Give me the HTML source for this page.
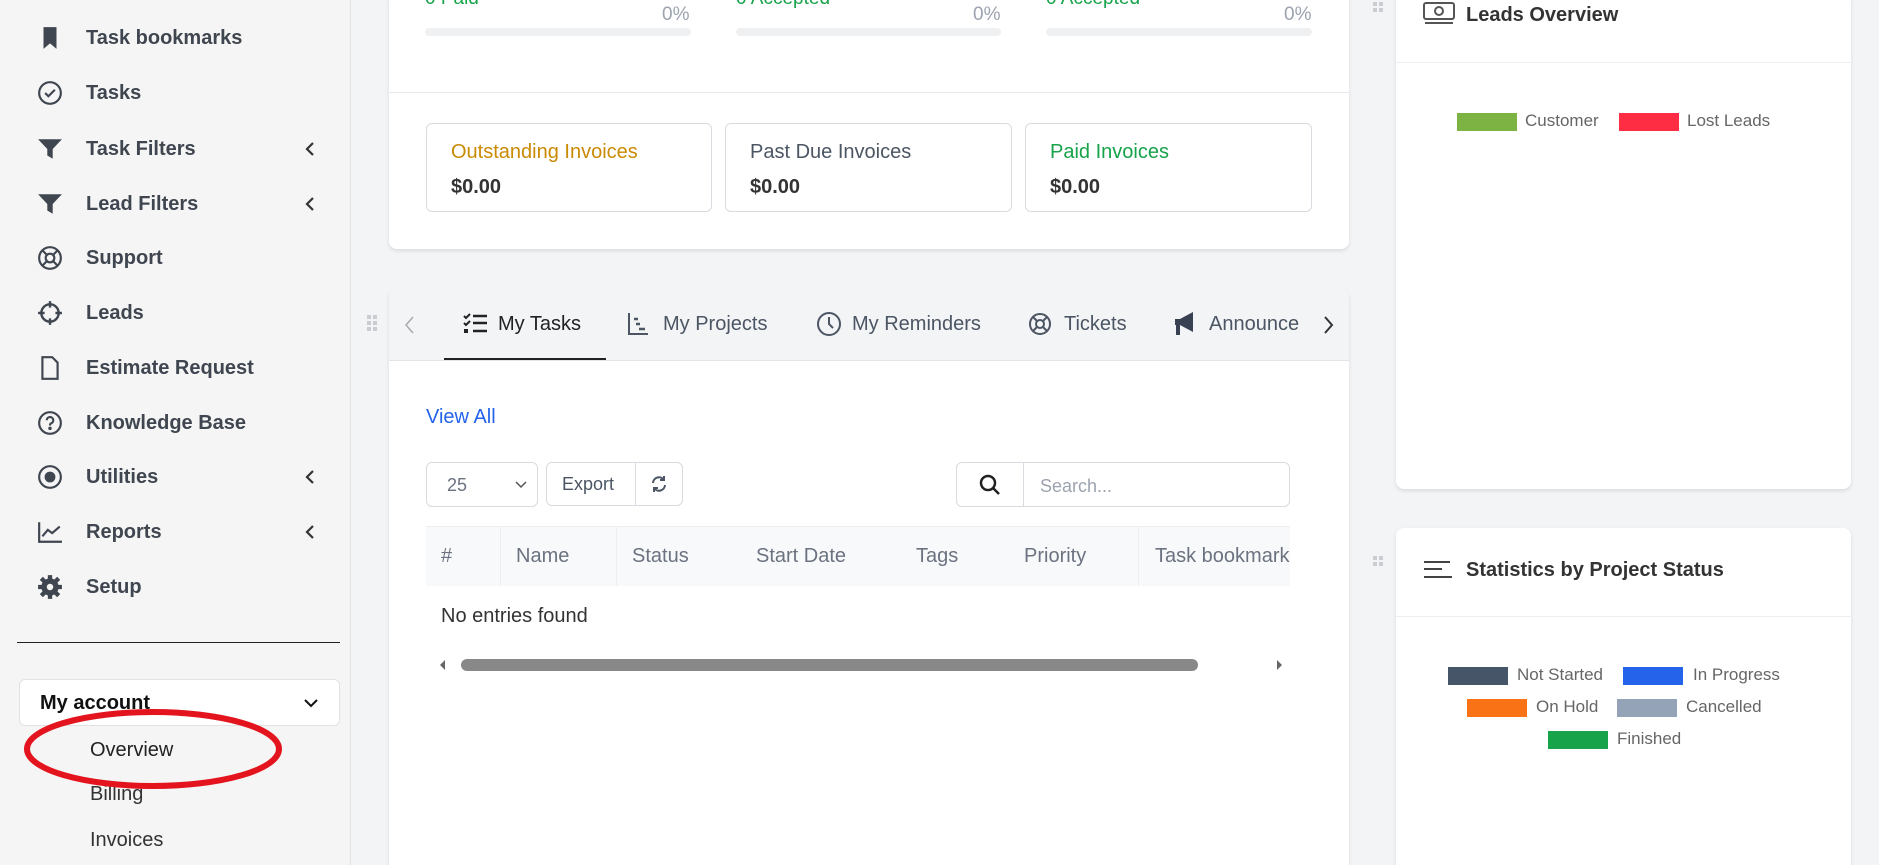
<!DOCTYPE html>
<html style="width:1879px;height:865px;overflow:hidden"><head><meta charset="utf-8"><style>
*{box-sizing:border-box;margin:0;padding:0}
body{width:1879px;height:865px;overflow:hidden;background:#f3f4f6;font-family:"Liberation Sans",sans-serif;position:relative;color:#374151}
.abs{position:absolute}
.side{left:0;top:0;width:351px;height:865px;background:#f5f5f5;border-right:1px solid #e3e3e3}
.item{position:absolute;left:0;width:350px;height:30px;display:flex;align-items:center}
.item svg{position:absolute;left:37px;width:26px;height:26px}
.item span{position:absolute;left:86px;font-size:20px;font-weight:bold;color:#3f4650}
.item .chev{position:absolute;left:300px;top:5px;width:20px;height:20px}
.card{background:#fff;border-radius:8px;box-shadow:0 2px 4px rgba(0,0,0,.1)}
.bar{height:8px;background:#eef0f2;border-radius:4px;top:28px}
.pct{font-size:19px;color:#9ca3af;top:4px}
.inv{top:123px;height:89px;border:1px solid #d8dbe0;border-radius:6px}
.inv .t{position:absolute;left:24px;top:17px;font-size:20px}
.inv .v{position:absolute;left:24px;top:52px;font-size:20px;font-weight:bold;color:#333}
.tab{top:313px;font-size:20px;color:#4b5563}
.th{top:545px;font-size:20px;color:#6b7280}
.lg{font-size:17px;color:#666}
.box{height:18px}
</style></head><body>
<div class="abs side">
 <div class="item" style="top:23px"><svg viewBox="0 0 24 24"><path d="M6 2h12v20l-6-5-6 5z" fill="#3f4650"/></svg><span>Task bookmarks</span></div>
 <div class="item" style="top:78px"><svg viewBox="0 0 24 24" fill="none" stroke="#3f4650" stroke-width="2"><circle cx="12" cy="12" r="10"/><path d="M7.5 12l3 3 6-6"/></svg><span>Tasks</span></div>
 <div class="item" style="top:134px"><svg viewBox="0 0 24 24"><path d="M1 3h22l-8.5 9v9l-5-3v-6z" fill="#3f4650"/></svg><span>Task Filters</span><svg class="chev" viewBox="0 0 20 20"><path d="M13 4l-6 6 6 6" fill="none" stroke="#333" stroke-width="2.2"/></svg></div>
 <div class="item" style="top:189px"><svg viewBox="0 0 24 24"><path d="M1 3h22l-8.5 9v9l-5-3v-6z" fill="#3f4650"/></svg><span>Lead Filters</span><svg class="chev" viewBox="0 0 20 20"><path d="M13 4l-6 6 6 6" fill="none" stroke="#333" stroke-width="2.2"/></svg></div>
 <div class="item" style="top:243px"><svg viewBox="0 0 24 24" fill="none" stroke="#3f4650" stroke-width="2"><circle cx="12" cy="12" r="10"/><circle cx="12" cy="12" r="4"/><path d="M5 5l4 4M19 5l-4 4M5 19l4-4M19 19l-4-4"/></svg><span>Support</span></div>
 <div class="item" style="top:298px"><svg viewBox="0 0 24 24" fill="none" stroke="#3f4650" stroke-width="2.2"><circle cx="12" cy="12" r="8"/><path d="M12 1v6M12 17v6M1 12h6M17 12h6"/></svg><span>Leads</span></div>
 <div class="item" style="top:353px"><svg viewBox="0 0 24 24" fill="none" stroke="#3f4650" stroke-width="2"><path d="M5 2h9l5 5v15H5z"/></svg><span>Estimate Request</span></div>
 <div class="item" style="top:408px"><svg viewBox="0 0 24 24" fill="none" stroke="#3f4650" stroke-width="2"><circle cx="12" cy="12" r="10"/><path d="M9 9.5a3 3 0 1 1 4 2.8c-1 .4-1 1-1 2"/><circle cx="12" cy="17" r=".6" fill="#3f4650"/></svg><span>Knowledge Base</span></div>
 <div class="item" style="top:462px"><svg viewBox="0 0 24 24" fill="none" stroke="#3f4650" stroke-width="2"><circle cx="12" cy="12" r="10"/><circle cx="12" cy="12" r="4" fill="#3f4650"/></svg><span>Utilities</span><svg class="chev" viewBox="0 0 20 20"><path d="M13 4l-6 6 6 6" fill="none" stroke="#333" stroke-width="2.2"/></svg></div>
 <div class="item" style="top:517px"><svg viewBox="0 0 24 24" fill="none" stroke="#3f4650" stroke-width="2"><path d="M2 3v18h21M5 16l5-6 4 3 7-6"/></svg><span>Reports</span><svg class="chev" viewBox="0 0 20 20"><path d="M13 4l-6 6 6 6" fill="none" stroke="#333" stroke-width="2.2"/></svg></div>
 <div class="item" style="top:572px"><svg viewBox="0 0 24 24"><circle cx="12" cy="12" r="8" fill="#3f4650"/><g stroke="#3f4650" stroke-width="4"><path d="M12 1v22M1 12h22M4 4l16 16M20 4L4 20"/></g><circle cx="12" cy="12" r="3" fill="#f5f5f5"/></svg><span>Setup</span></div>
 <div class="abs" style="left:17px;top:642px;width:323px;height:1px;background:#222"></div>
 <div class="abs" style="left:19px;top:679px;width:321px;height:47px;background:#fff;border:1px solid #e2e2e2;border-radius:6px"><span class="abs" style="left:20px;top:12px;font-size:20px;font-weight:bold;color:#111">My account</span><svg class="abs" style="left:283px;top:17px" width="16" height="12" viewBox="0 0 16 12"><path d="M2 3l6 6 6-6" fill="none" stroke="#111" stroke-width="2"/></svg></div>
 <div class="abs" style="left:90px;top:739px;font-size:20px;color:#222">Overview</div>
 <div class="abs" style="left:90px;top:783px;font-size:20px;color:#333">Billing</div>
 <div class="abs" style="left:90px;top:829px;font-size:20px;color:#333">Invoices</div>
</div>
<svg class="abs" style="left:20px;top:705px" width="266" height="88"><ellipse cx="133" cy="44" rx="126" ry="37" fill="none" stroke="#e3141d" stroke-width="6"/></svg>

<div class="abs card" style="left:389px;top:-10px;width:960px;height:259px">
 <div class="abs" style="left:36px;top:-2px;font-size:19px;color:#16a34a">0 Paid</div>
 <div class="abs" style="left:347px;top:-2px;font-size:19px;color:#16a34a">0 Accepted</div>
 <div class="abs" style="left:657px;top:-2px;font-size:19px;color:#16a34a">0 Accepted</div>
 <div class="abs pct" style="left:273px;top:14px">0%</div><div class="abs pct" style="left:584px;top:14px">0%</div><div class="abs pct" style="left:895px;top:14px">0%</div>
 <div class="abs bar" style="left:36px;top:38px;width:266px"></div><div class="abs bar" style="left:347px;top:38px;width:265px"></div><div class="abs bar" style="left:657px;top:38px;width:266px"></div>
 <div class="abs" style="left:0;top:102px;width:960px;height:1px;background:#e7e9ec"></div>
 <div class="abs inv" style="left:37px;top:133px;width:286px"><div class="t" style="color:#ca8a04">Outstanding Invoices</div><div class="v">$0.00</div></div>
 <div class="abs inv" style="left:336px;top:133px;width:287px"><div class="t" style="color:#4b5563">Past Due Invoices</div><div class="v">$0.00</div></div>
 <div class="abs inv" style="left:636px;top:133px;width:287px"><div class="t" style="color:#16a34a">Paid Invoices</div><div class="v">$0.00</div></div>
</div>

<svg class="abs" style="left:367px;top:315px" width="12" height="16"><g fill="#c9ccd1"><rect x="0" y="0" width="4" height="4"/><rect x="6" y="0" width="4" height="4"/><rect x="0" y="6" width="4" height="4"/><rect x="6" y="6" width="4" height="4"/><rect x="0" y="12" width="4" height="4"/><rect x="6" y="12" width="4" height="4"/></g></svg>
<div class="abs card" style="left:389px;top:289px;width:960px;height:590px">
 <div class="abs" style="left:0;top:0;width:960px;height:72px;background:#f3f4f6;border-bottom:1px solid #e2e4e8;border-radius:8px 8px 0 0"></div>
 <svg class="abs" style="left:15px;top:26px" width="12" height="20"><path d="M9 2l-7 8 7 8" fill="none" stroke="#aaa" stroke-width="1.5"/></svg>
 <div class="abs" style="left:55px;top:69px;width:162px;height:2px;background:#222"></div>
 <svg class="abs" style="left:933px;top:26px" width="12" height="20"><path d="M3 2l7 8-7 8" fill="none" stroke="#333" stroke-width="2"/></svg>
</div>
<svg class="abs" style="left:463px;top:312px" width="26" height="22" viewBox="0 0 26 22"><path d="M1 4l2 2 4-4M1 11l2 2 4-4" fill="none" stroke="#222" stroke-width="2"/><rect x="1" y="17" width="4" height="4" fill="#222"/><path d="M10 4h14M10 11h14M10 19h14" stroke="#222" stroke-width="2.5"/></svg>
<div class="abs tab" style="left:498px;color:#222">My Tasks</div>
<svg class="abs" style="left:627px;top:312px" width="22" height="24" viewBox="0 0 22 24"><path d="M2 1v21h19" fill="none" stroke="#4b5563" stroke-width="2"/><path d="M7 7h4M9 12h4M12 17h6" stroke="#4b5563" stroke-width="2.5"/></svg>
<div class="abs tab" style="left:663px">My Projects</div>
<svg class="abs" style="left:816px;top:311px" width="26" height="26" viewBox="0 0 26 26" fill="none" stroke="#4b5563" stroke-width="2"><circle cx="13" cy="13" r="11"/><path d="M13 6v7l4 4"/></svg>
<div class="abs tab" style="left:852px">My Reminders</div>
<svg class="abs" style="left:1028px;top:311px" width="24" height="26" viewBox="0 0 24 24" fill="none" stroke="#4b5563" stroke-width="2"><circle cx="12" cy="12" r="10"/><circle cx="12" cy="12" r="4"/><path d="M5 5l4 4M19 5l-4 4M5 19l4-4M19 19l-4-4"/></svg>
<div class="abs tab" style="left:1064px">Tickets</div>
<svg class="abs" style="left:1173px;top:310px" width="26" height="28" viewBox="0 0 26 28"><path d="M2 9h5l13-7v20L7 15v10H3V15H2z" fill="#374151"/></svg>
<div class="abs tab" style="left:1209px">Announce</div>

<div class="abs" style="left:426px;top:406px;font-size:20px;color:#2563eb">View All</div>
<div class="abs" style="left:426px;top:462px;width:112px;height:45px;border:1px solid #d8dbe0;border-radius:6px;background:#fff"><span class="abs" style="left:20px;top:12px;font-size:18px;color:#6b7280">25</span><svg class="abs" style="left:88px;top:18px" width="12" height="8"><path d="M1 1l5 5 5-5" fill="none" stroke="#555" stroke-width="1.5"/></svg></div>
<div class="abs" style="left:546px;top:462px;width:137px;height:44px;border:1px solid #d8dbe0;border-radius:6px;background:#fff"><span class="abs" style="left:15px;top:11px;font-size:18px;color:#4b5563">Export</span><div class="abs" style="left:88px;top:0;width:1px;height:42px;background:#d8dbe0"></div><svg class="abs" style="left:103px;top:12px" width="18" height="18" viewBox="0 0 18 18" fill="none" stroke="#4b5563" stroke-width="2"><path d="M3 8a6 6 0 0 1 11-3M15 10a6 6 0 0 1-11 3"/><path d="M14 1v4h-4M4 17v-4h4"/></svg></div>
<div class="abs" style="left:956px;top:462px;width:334px;height:45px;border:1px solid #d8dbe0;border-radius:6px;background:#fff"><div class="abs" style="left:66px;top:0;width:1px;height:43px;background:#d8dbe0"></div><svg class="abs" style="left:22px;top:11px" width="22" height="22" viewBox="0 0 22 22" fill="none" stroke="#222" stroke-width="2.5"><circle cx="9" cy="9" r="7"/><path d="M14 14l6 6"/></svg><span class="abs" style="left:83px;top:13px;font-size:18px;color:#9ca3af">Search...</span></div>
<div class="abs" style="left:426px;top:526px;width:864px;height:60px;background:#f8f9fa;border-top:1px solid #eceef0"></div>
<div class="abs" style="left:500px;top:526px;width:1px;height:60px;background:#eceef0"></div>
<div class="abs" style="left:616px;top:526px;width:1px;height:60px;background:#eceef0"></div>
<div class="abs" style="left:1138px;top:526px;width:1px;height:60px;background:#eceef0"></div>
<div class="abs th" style="left:441px">#</div><div class="abs th" style="left:516px">Name</div><div class="abs th" style="left:632px">Status</div><div class="abs th" style="left:756px">Start Date</div><div class="abs th" style="left:916px">Tags</div><div class="abs th" style="left:1024px">Priority</div><div class="abs th" style="left:1155px;width:135px;overflow:hidden;white-space:nowrap">Task bookmarks</div>
<div class="abs" style="left:441px;top:605px;font-size:20px;color:#333">No entries found</div>
<svg class="abs" style="left:436px;top:655px" width="850" height="20"><path d="M4 10l5-5v10z" fill="#666"/><rect x="25" y="4" width="737" height="12" rx="6" fill="#888"/><path d="M846 10l-5-5v10z" fill="#666"/></svg>

<svg class="abs" style="left:1373px;top:2px" width="12" height="16"><g fill="#c9ccd1"><rect x="0" y="0" width="4" height="4"/><rect x="6" y="0" width="4" height="4"/><rect x="0" y="6" width="4" height="4"/><rect x="6" y="6" width="4" height="4"/></g></svg>
<div class="abs card" style="left:1396px;top:-10px;width:455px;height:499px">
 <div class="abs" style="left:0;top:72px;width:455px;height:1px;background:#eceef0"></div>
 <svg class="abs" style="left:26px;top:11px" width="34" height="26" viewBox="0 0 34 26" fill="none" stroke="#555" stroke-width="2"><rect x="2" y="2" width="30" height="16" rx="2"/><circle cx="17" cy="10" r="4"/><path d="M3 22h28"/></svg>
 <div class="abs" style="left:70px;top:14px;font-size:20px;font-weight:bold;color:#333">Leads Overview</div>
 <div class="abs box" style="left:61px;top:123px;width:60px;background:#7cb342"></div><div class="abs lg" style="left:129px;top:121px">Customer</div>
 <div class="abs box" style="left:223px;top:123px;width:60px;background:#ff2d44"></div><div class="abs lg" style="left:291px;top:121px">Lost Leads</div>
</div>
<svg class="abs" style="left:1373px;top:556px" width="12" height="16"><g fill="#c9ccd1"><rect x="0" y="0" width="4" height="4"/><rect x="6" y="0" width="4" height="4"/><rect x="0" y="6" width="4" height="4"/><rect x="6" y="6" width="4" height="4"/></g></svg>
<div class="abs card" style="left:1396px;top:528px;width:455px;height:350px">
 <div class="abs" style="left:0;top:88px;width:455px;height:1px;background:#eceef0"></div>
 <svg class="abs" style="left:28px;top:33px" width="28" height="18"><path d="M0 1h26M0 8h18M0 16h28" stroke="#444" stroke-width="2"/></svg>
 <div class="abs" style="left:70px;top:31px;font-size:20px;font-weight:bold;color:#333">Statistics by Project Status</div>
 <div class="abs box" style="left:52px;top:139px;width:60px;background:#475569"></div><div class="abs lg" style="left:121px;top:137px">Not Started</div>
 <div class="abs box" style="left:227px;top:139px;width:60px;background:#2563eb"></div><div class="abs lg" style="left:297px;top:137px">In Progress</div>
 <div class="abs box" style="left:71px;top:171px;width:60px;background:#f97316"></div><div class="abs lg" style="left:140px;top:169px">On Hold</div>
 <div class="abs box" style="left:221px;top:171px;width:60px;background:#94a3b8"></div><div class="abs lg" style="left:290px;top:169px">Cancelled</div>
 <div class="abs box" style="left:152px;top:203px;width:60px;background:#16a34a"></div><div class="abs lg" style="left:221px;top:201px">Finished</div>
</div>
</body></html>
